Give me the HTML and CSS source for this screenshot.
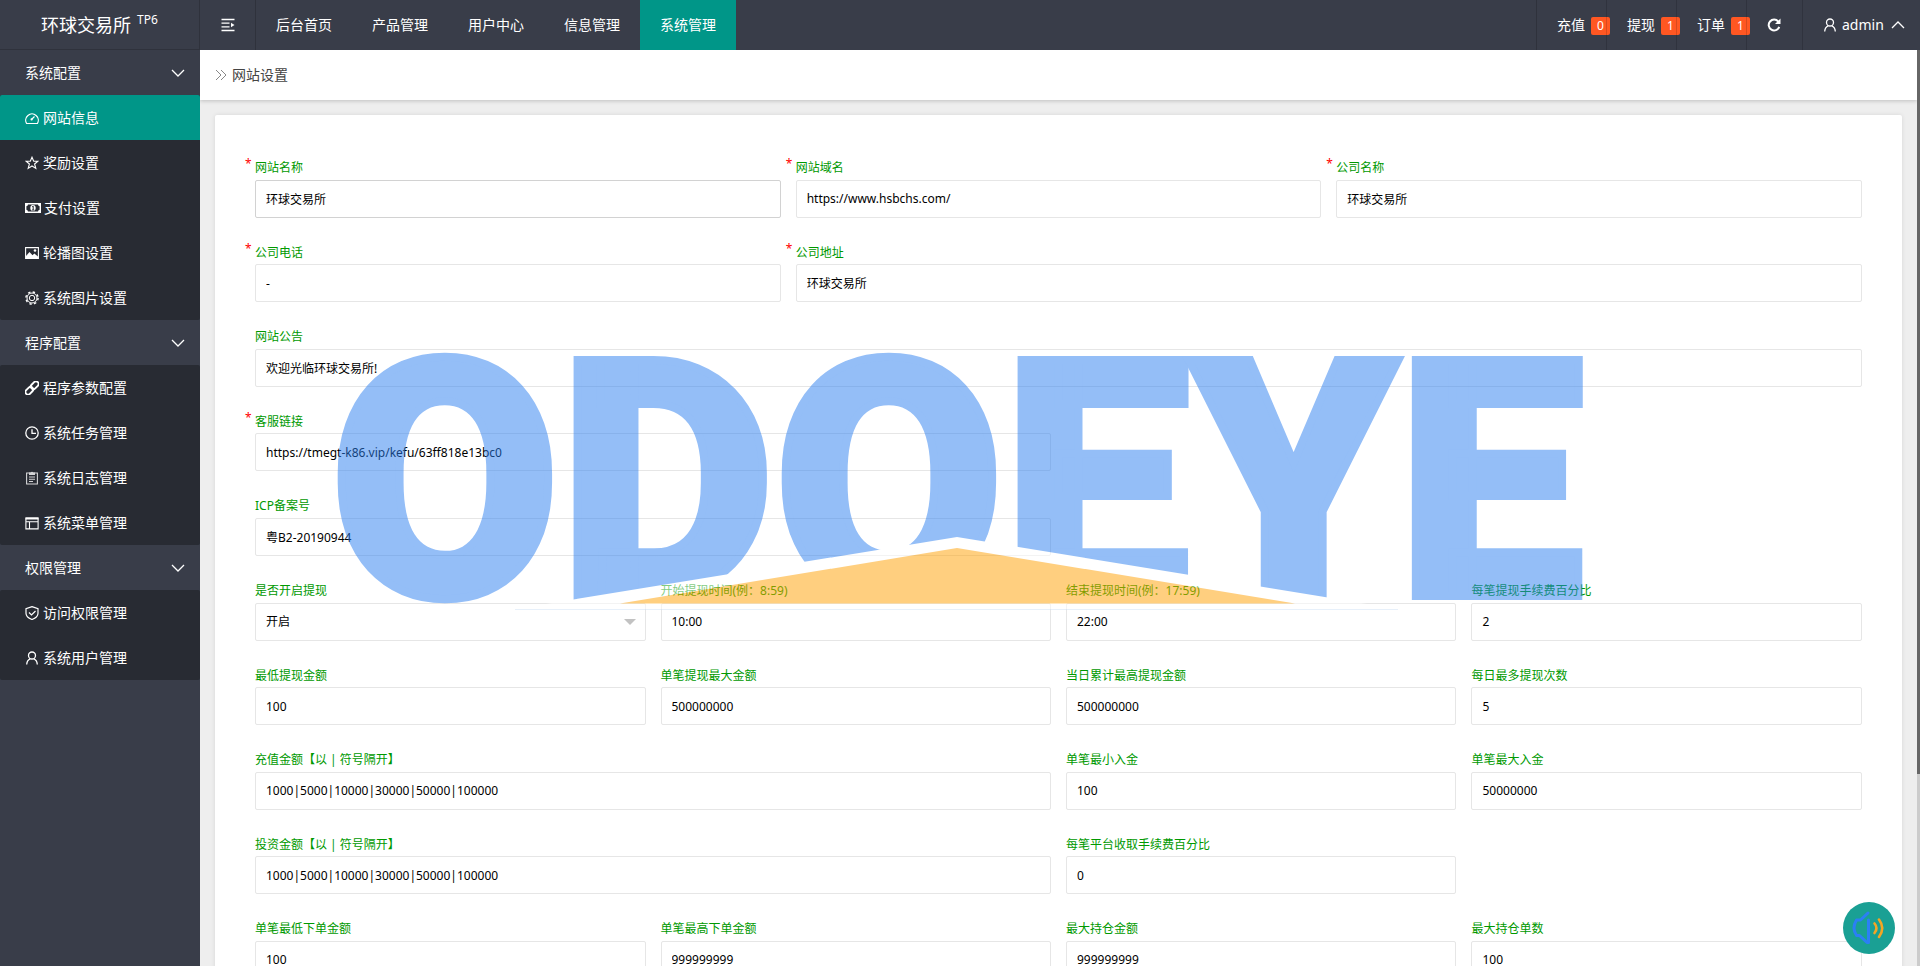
FILE: index.html
```html
<!DOCTYPE html>
<html lang="zh-CN">
<head>
<meta charset="utf-8">
<title>网站设置</title>
<link rel="stylesheet" href="styles.css">
</head>
<body>
<header class="topbar">
  <a class="brand" href="#">环球交易所<sup>TP6</sup></a>
  <button class="toggle" type="button" aria-label="折叠菜单">
    <svg class="icon" viewBox="0 0 14 14"><path d="M.5 1.500h13M.5 5.200h8M.5 8.800h8M.5 12.500h13" stroke="currentColor" stroke-width="1.300" fill="none"/><path d="M13.500 7L10 4.800v4.400z" fill="currentColor"/></svg>
  </button>
  <nav class="modules">
    <a href="#">后台首页</a>
    <a href="#">产品管理</a>
    <a href="#">用户中心</a>
    <a href="#">信息管理</a>
    <a class="active" href="#">系统管理</a>
  </nav>
  <ul class="tools">
    <li><a href="#">充值 <span class="badge">0</span></a></li>
    <li><a href="#">提现 <span class="badge">1</span></a></li>
    <li><a href="#">订单 <span class="badge">1</span></a></li>
    <li class="refresh"><button type="button" aria-label="刷新"><svg class="icon" viewBox="0 0 14 14"><path d="M11.300 3.600A5.400 5.400 0 1 0 12.200 8.800" stroke="currentColor" stroke-width="2" fill="none"/><path d="M13.500 .5v5.500H8z" fill="currentColor"/></svg></button></li>
    <li class="account"><a href="#"><svg class="icon" viewBox="0 0 14 14"><g fill="none" stroke="currentColor" stroke-width="1.300"><circle cx="7" cy="4.500" r="3.500"/><path d="M1.700 13.500c.2-3 1.600-4.800 3.500-5.600M12.300 13.500c-.2-3-1.600-4.800-3.500-5.600"/></g></svg>admin<svg class="icon caret" viewBox="0 0 14 14"><path d="M1 10l6-6 6 6" fill="none" stroke="currentColor" stroke-width="1.300"/></svg></a></li>
  </ul>
</header>

<div class="body">
  <nav class="sidebar">
    <button class="group" type="button">系统配置<svg class="icon" viewBox="0 0 14 14"><path d="M1 4l6 6 6-6" fill="none" stroke="currentColor" stroke-width="1.300"/></svg></button>
    <div class="sub">
      <a class="active" href="#"><svg class="icon" viewBox="0 0 14 14"><path d="M1.600 12.500A6.300 6.300 0 1 1 12.400 12.500z M6.500 8.500l3-3" fill="none" stroke="currentColor" stroke-width="1.200"/><circle cx="6.600" cy="8.400" r="1.100" fill="currentColor"/></svg>网站信息</a>
      <a href="#"><svg class="icon" viewBox="0 0 14 14"><path d="M7 1.200l1.700 4h4.200L9.600 8l1.200 4.400L7 10l-3.800 2.400L4.400 8 1.100 5.200h4.200z" fill="none" stroke="currentColor" stroke-width="1.100"/></svg>奖励设置</a>
      <a href="#"><svg class="icon wide" viewBox="0 0 16 14"><path fill-rule="evenodd" d="M0 2h16v10H0zM3 3.500A2 2 0 0 1 1.400 5.200v3.600A2 2 0 0 1 3 10.500h10a2 2 0 0 1 1.600-1.700V5.200A2 2 0 0 1 13 3.500z" fill="currentColor"/><ellipse cx="8" cy="7" rx="2.700" ry="3" fill="currentColor"/><path d="M7.200 5.800l1-.7v3.800M7 9h2.200" fill="none" stroke="#282b33" stroke-width="1"/></svg>支付设置</a>
      <a href="#"><svg class="icon" viewBox="0 0 14 14"><path d="M.6 1.600h12.800v10.800H.6z" fill="none" stroke="currentColor" stroke-width="1.100"/><path d="M1 11.500V10l3.500-4 3 3.200L9.300 7.500 13 10.500v1.500H1z" fill="currentColor"/><circle cx="10" cy="4.500" r="1.300" fill="currentColor"/></svg>轮播图设置</a>
      <a href="#"><svg class="icon" viewBox="0 0 14 14"><g fill="none" stroke="currentColor"><circle cx="7" cy="7" r="2.700"/><circle cx="7" cy="7" r="5"/><circle cx="7" cy="7" r="6.100" stroke-width="1.400" stroke-dasharray="2.400 2.390"/></g></svg>系统图片设置</a>
    </div>
    <button class="group" type="button">程序配置<svg class="icon" viewBox="0 0 14 14"><path d="M1 4l6 6 6-6" fill="none" stroke="currentColor" stroke-width="1.300"/></svg></button>
    <div class="sub">
      <a href="#"><svg class="icon" viewBox="0 0 14 14"><g fill="none" stroke="currentColor" stroke-width="1.900" transform="rotate(-45 7 7)"><rect x="-1.200" y="4.400" width="8.800" height="5.200" rx="2.600"/><rect x="6.400" y="4.400" width="8.800" height="5.200" rx="2.600"/></g></svg>程序参数配置</a>
      <a href="#"><svg class="icon" viewBox="0 0 14 14"><path d="M7 .8a6.200 6.200 0 1 1 0 12.400A6.200 6.200 0 0 1 7 .8zM7 3.200v4.200h4" fill="none" stroke="currentColor" stroke-width="1.300"/></svg>系统任务管理</a>
      <a href="#"><svg class="icon dim" viewBox="0 0 14 14"><path d="M1.600 2h10.800v11H1.600zM4 6h6M4 8.300h6M4 10.500h4" fill="none" stroke="currentColor" stroke-width="1.100"/><path d="M4 1.500h1.800a1.300 1.300 0 0 1 2.400 0H10v2.400H4z" fill="currentColor"/></svg>系统日志管理</a>
      <a href="#"><svg class="icon" viewBox="0 0 14 14"><path d="M.9 2h12.200v10.900H.9zM.9 5.800h12.200M4.500 5.800v7" fill="none" stroke="currentColor" stroke-width="1.100"/><path d="M.6 1.500h12.800v2H.6z" fill="currentColor"/></svg>系统菜单管理</a>
    </div>
    <button class="group" type="button">权限管理<svg class="icon" viewBox="0 0 14 14"><path d="M1 4l6 6 6-6" fill="none" stroke="currentColor" stroke-width="1.300"/></svg></button>
    <div class="sub">
      <a href="#"><svg class="icon" viewBox="0 0 14 14"><path d="M7 .6l6 2v4.600c0 3-2.600 5-6 6.300-3.400-1.300-6-3.300-6-6.300V2.600zM4 6.500L6.500 9l4-4" fill="none" stroke="currentColor" stroke-width="1.200"/></svg>访问权限管理</a>
      <a href="#"><svg class="icon" viewBox="0 0 14 14"><g fill="none" stroke="currentColor" stroke-width="1.300"><circle cx="7" cy="4.500" r="3.500"/><path d="M1.700 13.500c.2-3 1.600-4.800 3.500-5.600M12.300 13.500c-.2-3-1.600-4.800-3.500-5.600"/></g></svg>系统用户管理</a>
    </div>
  </nav>

  <main class="content">
    <h1 class="crumb"><svg class="icon" viewBox="0 0 14 14"><path d="M2 2l5 5-5 5M7 2l5 5-5 5" fill="none" stroke="#888" stroke-width="1"/></svg>网站设置</h1>
    <form class="card">
      <div class="field s4 required"><label for="f1">网站名称</label><input class="hover" id="f1" value="环球交易所"></div>
      <div class="field s4 required"><label for="f2">网站域名</label><input id="f2" value="https://www.hsbchs.com/"></div>
      <div class="field s4 required"><label for="f3">公司名称</label><input id="f3" value="环球交易所"></div>

      <div class="field s4 required"><label for="f4">公司电话</label><input id="f4" value="-"></div>
      <div class="field s8 required"><label for="f5">公司地址</label><input id="f5" value="环球交易所"></div>

      <div class="field s12"><label for="f6">网站公告</label><input id="f6" value="欢迎光临环球交易所!"></div>

      <div class="field s6 first required"><label for="f7">客服链接</label><input id="f7" value="https://tmegt-k86.vip/kefu/63ff818e13bc0"></div>

      <div class="field s6 first"><label for="f8">ICP备案号</label><input id="f8" value="粤B2-20190944"></div>

      <div class="field s3 first pick"><label for="f9">是否开启提现</label><select id="f9"><option>开启</option><option>关闭</option></select></div>
      <div class="field s3"><label for="f10">开始提现时间(例：8:59)</label><input id="f10" value="10:00"></div>
      <div class="field s3"><label for="f11">结束提现时间(例：17:59)</label><input id="f11" value="22:00"></div>
      <div class="field s3"><label for="f12">每笔提现手续费百分比</label><input id="f12" value="2"></div>

      <div class="field s3"><label for="f13">最低提现金额</label><input id="f13" value="100"></div>
      <div class="field s3"><label for="f14">单笔提现最大金额</label><input id="f14" value="500000000"></div>
      <div class="field s3"><label for="f15">当日累计最高提现金额</label><input id="f15" value="500000000"></div>
      <div class="field s3"><label for="f16">每日最多提现次数</label><input id="f16" value="5"></div>

      <div class="field s6"><label for="f17">充值金额【以 | 符号隔开】</label><input id="f17" value="1000|5000|10000|30000|50000|100000"></div>
      <div class="field s3"><label for="f18">单笔最小入金</label><input id="f18" value="100"></div>
      <div class="field s3"><label for="f19">单笔最大入金</label><input id="f19" value="50000000"></div>

      <div class="field s6"><label for="f20">投资金额【以 | 符号隔开】</label><input id="f20" value="1000|5000|10000|30000|50000|100000"></div>
      <div class="field s3"><label for="f21">每笔平台收取手续费百分比</label><input id="f21" value="0"></div>

      <div class="field s3 first"><label for="f22">单笔最低下单金额</label><input id="f22" value="100"></div>
      <div class="field s3"><label for="f23">单笔最高下单金额</label><input id="f23" value="999999999"></div>
      <div class="field s3"><label for="f24">最大持仓金额</label><input id="f24" value="999999999"></div>
      <div class="field s3"><label for="f25">最大持仓单数</label><input id="f25" value="100"></div>
    </form>
  </main>
  <div class="scroll" aria-hidden="true"></div>
</div>

<svg class="watermark" viewBox="0 0 1232 264" aria-hidden="true">
  <text class="wordmark" x="616" y="250">ODOEYE</text>
  <path d="M174 263L616 191l441 72z" fill="#fff"/>
  <path d="M174 263.500H1057" stroke="#cfe2f5" fill="none"/>
  <path d="M279 257.500L616 202l338 55.500z" fill="#ff9f00"/>
</svg>

<button class="sound" type="button" aria-label="声音提醒">
  <svg viewBox="0 0 36 36"><g fill="none" stroke="#2b7ff5" stroke-width="3" stroke-linecap="round" stroke-linejoin="round"><path d="M17 3L9.500 10H5.500Q3 14 3 18T5.500 25.500H8.500L16 32.500H17.500V10"/></g><g fill="none" stroke="#f5a623" stroke-width="2.600" stroke-linecap="round"><path d="M23.500 13.500Q27.500 18 23.500 23"/><path d="M28 9.500Q34.500 18 28 27"/></g></svg>
</button>
</body>
</html>
```
FILE: styles.css
```css
* { box-sizing: border-box; }

body {
  margin: 0;
  height: 100vh;
  display: flex;
  flex-direction: column;
  overflow: hidden;
  background: #eee;
  color: #444;
  font: 14px/24px "Noto Sans", "Noto Sans CJK SC", sans-serif;
}

a { color: inherit; text-decoration: none; }
button { font: inherit; color: inherit; background: none; border: 0; padding: 0; cursor: pointer; }

.icon { width: 14px; height: 14px; flex: none; }
.icon.wide { width: 16px; margin-right: -1px; }
.icon.dim { opacity: .8; }

.topbar {
  flex: none;
  display: flex;
  height: 50px;
  background: #393d49;
  color: #fff;
}

.brand {
  width: 200px;
  display: flex;
  align-items: center;
  justify-content: center;
  gap: 6px;
  font-size: 18px;
  border-right: 1px solid #2f323c;
  border-bottom: 1px solid #2f323c;
}
.brand sup { font-size: 12px; line-height: 12px; padding-bottom: 10px; }

.toggle { width: 56px; display: grid; place-items: center; border-right: 1px solid #2f323c; }

.modules { display: flex; flex: 1; }
.modules a { padding: 0 20px; line-height: 50px; }
.modules .active { background: #009688; }

.tools { display: flex; margin: 0; padding: 0; list-style: none; border-left: 1px solid #2f323c; }
.tools li { position: relative; width: 70px; }
.tools li::after {
  content: "";
  position: absolute;
  inset: 0 0 0 auto;
  width: 1px;
  background: rgba(0, 0, 0, .15);
}
.tools a, .tools button { display: flex; align-items: center; gap: 6px; height: 50px; padding-left: 20px; white-space: nowrap; }
.tools .refresh { width: 56px; }
.tools .account { width: 117px; }
.tools .account::after { display: none; }
.tools .account a { gap: 5px; }
.tools .caret { margin-left: 2px; }

.badge {
  min-width: 19px;
  margin-top: 2px;
  padding: 0 6px;
  border-radius: 2px;
  background: #ff5722;
  font-size: 12px;
  line-height: 18px;
  text-align: center;
}

.body { flex: 1; min-height: 0; display: flex; }

.sidebar { flex: none; width: 200px; background: #393d49; color: #fff; }
.group, .sub a { display: flex; align-items: center; width: 100%; height: 45px; padding: 0 15px 0 25px; }
.group { justify-content: space-between; }
.sub { background: #282b33; border-radius: 2px; overflow: hidden; }
.sub a { gap: 4px; }
.sub .active { background: #009688; }

.content { flex: 1; min-width: 0; display: flex; flex-direction: column; overflow: hidden; }

.crumb {
  flex: none;
  display: flex;
  align-items: center;
  gap: 4px;
  height: 50px;
  margin: 0;
  padding: 0 14px;
  background: #fff;
  box-shadow: 0 1px 4px rgba(0, 0, 0, .2);
  font-size: 14px;
  font-weight: 400;
}

.card {
  flex: none;
  display: grid;
  grid-template-columns: repeat(12, 1fr);
  gap: 26px 15px;
  margin: 15px;
  padding: 44px 40px;
  background: #fff;
  border-radius: 2px;
  box-shadow: 0 0 4px rgba(0, 0, 0, .1);
  font-size: 12px;
}

.field { position: relative; display: flex; flex-direction: column; gap: 2px; }
.s3 { grid-column-end: span 3; }
.s4 { grid-column-end: span 4; }
.s6 { grid-column-end: span 6; }
.s8 { grid-column-end: span 8; }
.s12 { grid-column-end: span 12; }
.first { grid-column-start: 1; }

.field label { color: #090; line-height: 1.55; }
.field.required::before {
  content: "*";
  position: absolute;
  top: -2px;
  left: -10px;
  color: #f00;
  line-height: 14px;
}

.field input, .field select {
  width: 100%;
  height: 38px;
  padding: 0 10px;
  border: 1px solid #e6e6e6;
  border-radius: 2px;
  background: #fff;
  color: #000;
  font: inherit;
  appearance: none;
}
.field input.hover { border-color: #d2d2d2; }

.pick::after {
  content: "";
  position: absolute;
  right: 10px;
  bottom: 16px;
  border: 6px solid transparent;
  border-top-color: #c2c2c2;
  border-bottom: 0;
}

.scroll { flex: none; width: 3px; background: linear-gradient(#666 79%, #ccc 79%); }

.watermark {
  position: fixed;
  top: 346px;
  left: 341px;
  width: 1232px;
  height: 264px;
  overflow: visible;
  opacity: .5;
  pointer-events: none;
}
.wordmark {
  font: 900 332px Roboto, sans-serif;
  fill: #2a7eef;
  stroke: #2a7eef;
  stroke-width: 8px;
  text-anchor: middle;
}

.sound {
  position: fixed;
  right: 25px;
  bottom: 12px;
  width: 52px;
  height: 52px;
  display: grid;
  place-items: center;
  border-radius: 50%;
  background: #1aa094;
}
.sound svg { width: 36px; height: 36px; }
```
